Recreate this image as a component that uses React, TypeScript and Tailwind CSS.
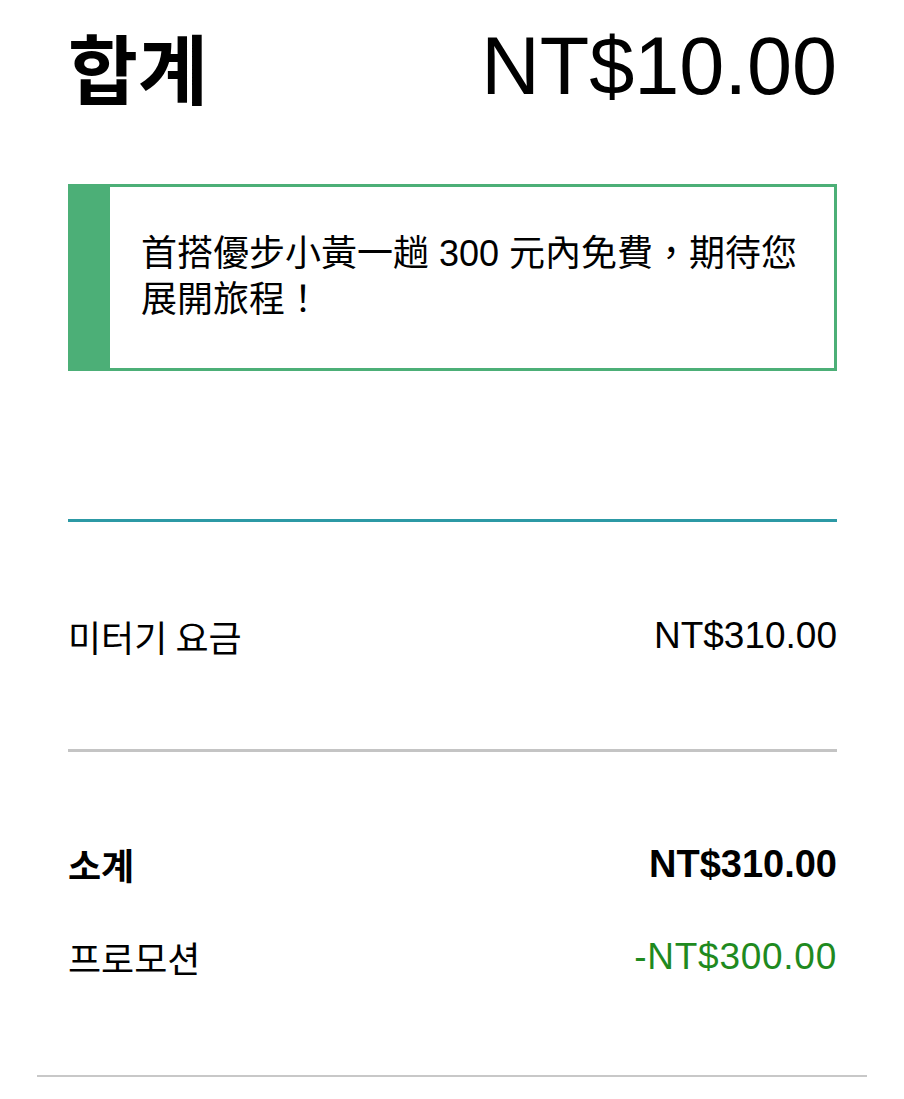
const latin = "font-['Liberation_Sans','Noto_Sans_CJK_KR',sans-serif]";
const korean = "font-['Noto_Sans_CJK_KR',sans-serif]";

interface LineItem {
  label: string;
  value: string;
  strong?: boolean;
  valueClass?: string;
}

const summary: LineItem[] = [
  { label: "소계", value: "NT$310.00", strong: true },
  { label: "프로모션", value: "-NT$300.00", valueClass: "text-[#1f8a1f] tracking-[0.02em]" },
];

function Row({ label, value, strong, valueClass }: LineItem) {
  return (
    <div className="flex h-[93px] items-center justify-between text-black">
      <span className={`${korean} text-[36px] leading-none ${strong ? "font-bold" : "font-normal"}`}>
        {label}
      </span>
      <span
        className={`${latin} leading-none ${strong ? "text-[38px] font-bold" : "text-[37px] font-normal"} ${valueClass ?? ""}`}
      >
        {value}
      </span>
    </div>
  );
}

export default function App() {
  return (
    <div className="h-[1099px] w-[904px] overflow-hidden bg-white">
      <div className="pl-[68px] pr-[67px]">
        <div className="flex h-[132px] items-center justify-between text-black">
          <h1 className={`${korean} text-[76px] font-bold leading-none`}>합계</h1>
          <p className={`${latin} text-[81px] leading-none`}>NT$10.00</p>
        </div>

        <div className="mt-[52px] flex h-[187px] border-[3px] border-[#4caf77]">
          <div className="w-[39px] shrink-0 bg-[#4caf77]" />
          <p className="flex-1 pb-[40px] pl-[31px] pr-[24px] pt-[44px] font-['Liberation_Sans','Noto_Sans_CJK_TC',sans-serif] text-[36px] leading-[46px] text-black">
            首搭優步小黃一趟 300 元內免費，期待您展開旅程！
          </p>
        </div>

        <div className="mt-[148px] h-[3px] bg-[#2c99a5]" />

        <div className="flex h-[227px] items-center justify-between text-black">
          <span className={`${korean} text-[36px] leading-none`}>미터기 요금</span>
          <span className={`${latin} text-[37px] leading-none`}>NT$310.00</span>
        </div>

        <div className="h-[3px] bg-[#c4c4c4]" />

        <div className="pt-[65px]">
          {summary.map((item) => (
            <Row key={item.label} {...item} />
          ))}
        </div>
      </div>

      <div className="mx-[37px] mt-[72px] h-[2px] bg-[#c8c8c8]" />
    </div>
  );
}
